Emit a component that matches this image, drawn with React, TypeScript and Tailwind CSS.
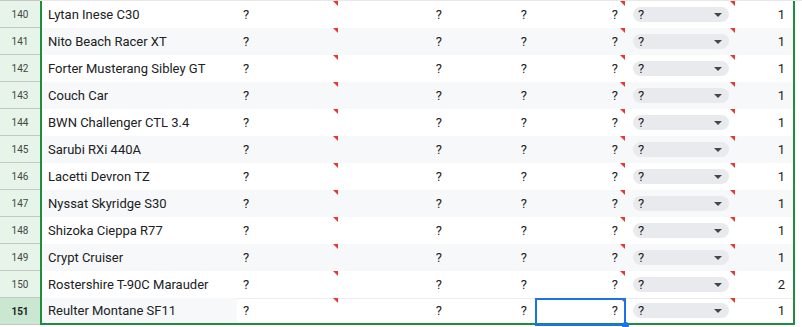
import React from "react";

const names = [
  "Lytan Inese C30",
  "Nito Beach Racer XT",
  "Forter Musterang Sibley GT",
  "Couch Car",
  "BWN Challenger CTL 3.4",
  "Sarubi RXi 440A",
  "Lacetti Devron TZ",
  "Nyssat Skyridge S30",
  "Shizoka Cieppa R77",
  "Crypt Cruiser",
  "Rostershire T-90C Marauder",
  "Reulter Montane SF11",
];
const counts = ["1", "1", "1", "1", "1", "1", "1", "1", "1", "1", "2", "1"];

function Tri() {
  return (
    <div className="absolute top-0 right-0 w-0 h-0 border-l-[5px] border-l-transparent border-t-[5px] border-t-[#e53935]" />
  );
}

export default function App() {
  return (
    <div
      className="relative w-[802px] h-[327px] bg-white overflow-hidden text-[13px] text-[#202124]"
      style={{ fontFamily: "Roboto, 'Liberation Sans', sans-serif" }}
    >
      <div className="flex h-px">
        <div className="w-[40px] bg-[#c4c7c5]" />
        <div className="flex-1 bg-[#e8e8e8]" />
      </div>
      <div className="flex">
        <div className="w-[40px] flex flex-col">
          {names.map((_, i) => {
            const last = i === names.length - 1;
            return (
              <div
                key={i}
                className={`h-[27px] border-b border-[#c4c7c5] flex items-center justify-center text-[10px] ${
                  last ? "bg-[#c9e7d1] font-bold text-[#1f1f1f]" : "bg-[#e6f4ea] text-[#444746]"
                }`}
              >
                {140 + i}
              </div>
            );
          })}
        </div>
        <div className="w-[755px] border-l-2 border-r-2 border-b-2 border-[#1e8e3e] flex flex-col">
          {names.map((n, i) => {
            const last = i === names.length - 1;
            const rowBg = i % 2 === 1 ? "bg-[#f6f8f9]" : "bg-white";
            const restBg = last ? "bg-white shadow-[inset_0_1px_0_#ececec]" : rowBg;
            return (
              <div key={i} className={`flex ${last ? "h-[25px]" : "h-[27px]"} ${rowBg}`}>
                <div className="w-[195px] flex items-center pl-[6px] whitespace-nowrap">{n}</div>
                <div className={`flex ${restBg}`}>
                  <div className="relative w-[101px] flex items-center pl-[6px]">
                    ?
                    <Tri />
                  </div>
                  <div className="w-[109px] flex items-center justify-end pr-[5px]">?</div>
                  <div className="w-[88px] flex items-center justify-end pr-[8px]">?</div>
                  <div className="relative w-[90px] flex items-center justify-end pr-[7px]">
                    ?
                    <Tri />
                  </div>
                  <div className="relative w-[110px] flex items-center pl-[8px] pr-[6px]">
                    <div className="w-full h-[15px] rounded-full bg-[#e8eaed] flex items-center justify-between pl-[5px] pr-[7px]">
                      <span className="leading-none">?</span>
                      <div className="w-0 h-0 border-l-[4px] border-r-[4px] border-t-[4px] border-l-transparent border-r-transparent border-t-[#444746]" />
                    </div>
                    <Tri />
                  </div>
                  <div className="w-[58px] flex items-center justify-end pr-[8px]">{counts[i]}</div>
                </div>
              </div>
            );
          })}
        </div>
      </div>
      <div className="absolute left-[535px] top-[298px] w-[91px] h-[28px] border-2 border-[#1a73e8]" />
      <div className="absolute left-[622px] top-[322px] w-[7px] h-[7px] rounded-full bg-[#1a73e8]" />
    </div>
  );
}
